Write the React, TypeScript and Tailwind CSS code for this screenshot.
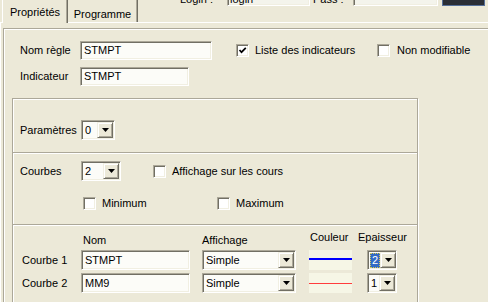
import React from "react";

const sunken =
  "border border-t-[#aca899] border-l-[#aca899] border-r-white border-b-white shadow-[inset_1px_1px_0_#716f64,inset_-1px_-1px_0_#f1efe2]";
const raised =
  "border border-t-[#f1efe2] border-l-[#f1efe2] border-r-[#716f64] border-b-[#716f64] shadow-[inset_1px_1px_0_white,inset_-1px_-1px_0_#aca899] bg-[#ece9d8]";

const Arrow = () => (
  <svg width="7" height="4" viewBox="0 0 7 4" className="block">
    <polygon points="0,0 7,0 3.5,4" fill="#000" />
  </svg>
);

const DropButton = () => (
  <div className={`${raised} flex h-[16px] w-[16px] shrink-0 items-center justify-center`}>
    <Arrow />
  </div>
);

const TextField = ({ value, className }: { value: string; className: string }) => (
  <div className={`${sunken} flex items-center bg-[#fcfcf8] pl-[3px] ${className}`}>
    {value}
  </div>
);

const Select = ({
  value,
  className,
  focused,
}: {
  value: string;
  className: string;
  focused?: boolean;
}) => (
  <div className={`${sunken} flex items-center bg-[#fcfcf8] p-[1px] ${className}`}>
    <div className="flex h-full flex-1 items-center pl-[1px]">
      {focused ? (
        <span className="flex h-[15px] items-center border border-dotted border-[#d8c850] bg-[#316ac5] px-[1px] text-white">
          {value}
        </span>
      ) : (
        <span className="pl-[1px]">{value}</span>
      )}
    </div>
    <DropButton />
  </div>
);

const Checkbox = ({ checked }: { checked?: boolean }) => (
  <div className={`${sunken} flex h-[13px] w-[13px] shrink-0 items-center justify-center bg-white`}>
    {checked && (
      <svg width="9" height="9" viewBox="0 0 9 9" className="block">
        <polyline points="1.5,4 3.5,6.2 7.8,1.8" fill="none" stroke="#000" strokeWidth="1.7" />
      </svg>
    )}
  </div>
);

const CheckItem = ({
  label,
  checked,
  className,
}: {
  label: string;
  checked?: boolean;
  className?: string;
}) => (
  <div className={`flex items-center gap-[6px] ${className ?? ""}`}>
    <Checkbox checked={checked} />
    <span>{label}</span>
  </div>
);

const Separator = "border-t border-t-[#aca899] shadow-[inset_0_1px_0_white]";

export default function App() {
  return (
    <div className="h-[302px] w-[488px] overflow-hidden bg-[#ece9d8] font-['Liberation_Sans',Arial,sans-serif] text-[11px] leading-none text-black">
      {/* tabs + login bar */}
      <div className="flex h-[22px]">
        <div className="flex items-end pl-[2px]">
          <div className="relative z-10 -mb-px flex h-[24px] w-[66px] items-center justify-center border-l border-t border-r border-l-white border-t-white border-r-[#716f64] bg-[#ece9d8] pt-[2px] shadow-[inset_-1px_0_0_#aca899]">
            Propriétés
          </div>
          <div className="flex h-[24px] w-[70px] items-center justify-center border-r border-r-[#716f64] pt-[8px] shadow-[inset_-1px_0_0_#aca899]">
            Programme
          </div>
        </div>
        <div className="-mt-[14px] ml-auto mr-[3px] flex h-[20px] items-center">
          <span className="w-[47px] pt-[6px]">Login :</span>
          <div className={`${sunken} flex h-[20px] w-[83px] items-center bg-[#f4f4ec] pl-[2px] pt-[6px]`}>
            login
          </div>
          <span className="ml-[3px] w-[40px] pt-[6px]">Pass :</span>
          <div className={`${sunken} h-[20px] w-[85px] bg-[#f4f4ec]`} />
          <div className="ml-[4px] h-[20px] w-[43px] border border-[#56709a] bg-[#2a2e36]" />
        </div>
      </div>

      {/* tab page */}
      <div className="h-[300px] border-l border-t border-white pl-[2px] pt-[5px]">
        <div className="h-[300px] w-[520px] border border-[#aca899] pt-[12px] shadow-[inset_1px_1px_0_white]">
          <div className="pl-[16px]">
            <div className="flex h-[19px] items-center">
              <span className="w-[60px]">Nom règle</span>
              <TextField value="STMPT" className="h-[19px] w-[132px]" />
              <CheckItem label="Liste des indicateurs" checked className="ml-[24px] w-[141px] gap-[5px]" />
              <CheckItem label="Non modifiable" className="gap-[7px]" />
            </div>
            <div className="mt-[7px] flex h-[19px] items-center">
              <span className="w-[60px]">Indicateur</span>
              <TextField value="STMPT" className="h-[19px] w-[109px]" />
            </div>
          </div>

          {/* inner box */}
          <div className="ml-[8px] mt-[12px] h-[220px] w-[406px] border border-[#aca899] shadow-[inset_1px_1px_0_white,1px_1px_0_white]">
            <div className="pb-[12px] pl-[7px] pt-[21px]">
              <div className="flex h-[20px] items-center">
                <span className="w-[61px]">Paramètres</span>
                <Select value="0" className="h-[20px] w-[34px]" />
              </div>
            </div>

            <div className={`${Separator} pb-[11px] pl-[7px] pt-[8px]`}>
              <div className="flex h-[20px] items-center">
                <span className="w-[61px]">Courbes</span>
                <Select value="2" className="h-[20px] w-[40px]" />
                <CheckItem label="Affichage sur les cours" className="ml-[32px]" />
              </div>
              <div className="mt-[12px] flex h-[20px] items-center">
                <CheckItem label="Minimum" className="ml-[63px] w-[134px]" />
                <CheckItem label="Maximum" />
              </div>
            </div>

            <div className={`${Separator} pl-[7px] pt-[8px]`}>
              <div className="flex h-[14px] items-center">
                <span className="w-[61px]" />
                <span className="w-[109px] pl-[2px]">Nom</span>
                <span className="ml-[12px] w-[94px]">Affichage</span>
                <span className="ml-[13px] w-[43px] pb-[6px] pl-[1px]">Couleur</span>
                <span className="ml-[6px] pb-[6px]">Epaisseur</span>
              </div>
              {[
                { label: "Courbe 1", name: "STMPT", line: "h-[2px] bg-[#0000ff]", pad: "pt-[8px]", ep: "2", focus: true },
                { label: "Courbe 2", name: "MM9", line: "h-px bg-[#ff3c3c]", pad: "pt-[10px]", ep: "1", focus: false },
              ].map((r) => (
                <div key={r.label} className="mt-[3px] flex h-[20px] items-center">
                  <span className="ml-[2px] w-[59px]">{r.label}</span>
                  <TextField value={r.name} className="h-[20px] w-[109px]" />
                  <Select value="Simple" className="ml-[12px] h-[20px] w-[94px]" />
                  <div className={`ml-[13px] h-[20px] w-[43px] shrink-0 bg-[#f6f6e6] ${r.pad}`}>
                    <div className={r.line} />
                  </div>
                  <Select value={r.ep} focused={r.focus} className="ml-[15px] h-[20px] w-[30px]" />
                </div>
              ))}
            </div>
          </div>
        </div>
      </div>
    </div>
  );
}
